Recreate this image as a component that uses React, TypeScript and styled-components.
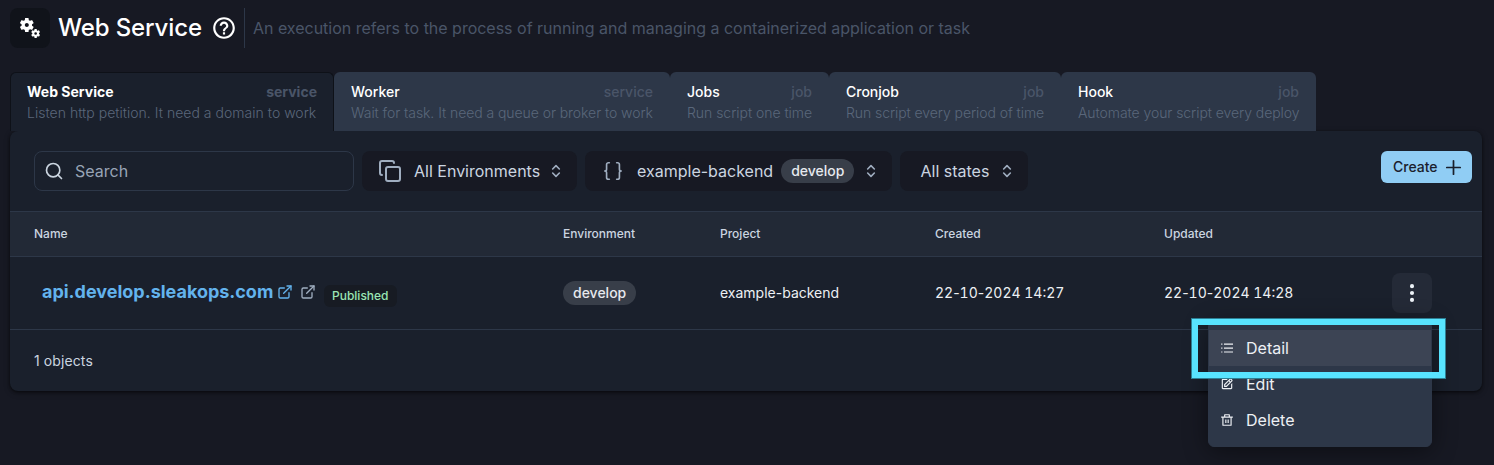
import React from "react";
import styled, { createGlobalStyle } from "styled-components";
import { MdMiscellaneousServices, MdHelpOutline } from "react-icons/md";
import { LuCopy, LuBraces, LuChevronsUpDown, LuPlus } from "react-icons/lu";
import { FiSearch, FiExternalLink } from "react-icons/fi";
import { BsThreeDotsVertical } from "react-icons/bs";
import { BiEdit } from "react-icons/bi";
import { RiDeleteBinLine } from "react-icons/ri";

const GlobalStyle = createGlobalStyle`
  *, *::before, *::after { box-sizing: border-box; }
  html, body { background: #171923; }
  body {
    margin: 0;
    height: 465px;
    overflow: hidden;
    font-family: Inter, sans-serif;
    font-size: 16px;
    line-height: 24px;
    color: rgba(255, 255, 255, 0.92);
  }
  svg { display: block; flex-shrink: 0; }
`;

const Page = styled.main`
  padding: 8px 12px 0 10px;
`;

const Header = styled.header`
  display: flex;
  align-items: center;
  height: 40px;
`;

const HeaderIcon = styled.div`
  display: grid;
  place-items: center;
  width: 40px;
  height: 40px;
  border-radius: 8px;
  background: #10131a;
  color: #fff;
`;

const Title = styled.h1`
  margin: 0 9px 0 8px;
  font-size: 24px;
  line-height: 32px;
  font-weight: 500;
  letter-spacing: -0.12px;
  color: #fff;
`;

const Description = styled.p`
  display: flex;
  align-items: center;
  height: 40px;
  margin: 0 0 0 7px;
  padding-left: 8px;
  border-left: 1px solid #2d3748;
  letter-spacing: -0.01px;
  color: #4a5568;
`;

const Tabs = styled.nav`
  display: flex;
  margin-top: 24px;
`;

const Tab = styled.div<{ $active?: boolean; $width: number }>`
  width: ${(p) => p.$width}px;
  height: 59px;
  padding: 8px 16px 0;
  border: 1px solid ${(p) => (p.$active ? "#0e1118" : "transparent")};
  border-bottom: 0;
  border-radius: 6px 6px 0 0;
  background: ${(p) => (p.$active ? "#1a202c" : "#2d3748")};
  font-size: 14px;
  line-height: 21px;
  font-weight: ${(p) => (p.$active ? 700 : 500)};
  color: #fff;
  white-space: nowrap;
`;

const TabHead = styled.div`
  display: flex;
  justify-content: space-between;
`;

const TabKind = styled.span`
  color: #4a5568;
`;

const TabText = styled.div<{ $spacing: number }>`
  font-weight: 300;
  letter-spacing: ${(p) => p.$spacing}px;
  color: #5a677b;
`;

const Card = styled.section`
  height: 260px;
  border-radius: 8px;
  background: #1a202c;
  box-shadow: 0 1px 3px rgba(0, 0, 0, 0.5), 0 2px 6px rgba(0, 0, 0, 0.3);
`;

const Toolbar = styled.div`
  display: flex;
  gap: 8px;
  height: 80px;
  padding: 20px 10px 0 24px;
`;

const SearchBox = styled.div`
  display: flex;
  align-items: center;
  gap: 11px;
  width: 320px;
  height: 40px;
  padding-left: 9px;
  border: 1px solid #2d3748;
  border-radius: 8px;
  color: #98a4b6;

  svg { color: #cbd5e0; }
`;

const Select = styled.div<{ $width: number; $pad: number }>`
  display: flex;
  align-items: center;
  width: ${(p) => p.$width}px;
  height: 40px;
  padding: 0 13px 0 ${(p) => p.$pad}px;
  border-radius: 8px;
  background: #171923;
  color: #cbd5e0;

  > svg { color: #a0aec0; }
`;

const SelectLabel = styled.span<{ $gap?: number }>`
  margin-left: ${(p) => p.$gap ?? 0}px;
  margin-right: 8px;
  white-space: nowrap;
`;

const SelectArrow = styled.span`
  margin-left: auto;
  color: #a0aec0;
`;

const Pill = styled.span`
  display: inline-flex;
  align-items: center;
  height: 24px;
  padding: 0 10px;
  border-radius: 12px;
  background: #383e49;
  color: #e6e9ee;
  font-size: 14px;
  font-weight: 500;
`;

const CreateButton = styled.button`
  display: flex;
  align-items: center;
  gap: 4px;
  width: 91px;
  height: 32px;
  margin-left: auto;
  padding: 0 0 0 12px;
  border: 0;
  border-radius: 6px;
  background: #90cdf4;
  color: #1a202c;
  font: 500 14px/20px Inter, sans-serif;
`;

const Row = styled.div<{ $head?: boolean }>`
  display: grid;
  grid-template-columns: 529px 157px 215px 229px 228px 40px;
  align-items: center;
  height: ${(p) => (p.$head ? 46 : 73)}px;
  padding-left: 24px;
  border-top: ${(p) => (p.$head ? "1px solid #2d3748" : "0")};
  border-bottom: 1px solid #2d3748;
  background: ${(p) => (p.$head ? "#222936" : "transparent")};
  color: ${(p) => (p.$head ? "#cbd5e0" : "#edf0f4")};
  font-size: ${(p) => (p.$head ? 12 : 14)}px;
  font-weight: ${(p) => (p.$head ? 500 : 400)};
`;

const DateDigits = styled.span`
  font-variant-numeric: tabular-nums;
`;

const NameCell = styled.div`
  display: flex;
  align-items: center;
  padding: 0 0 2px 8px;
`;

const ServiceLink = styled.a`
  display: flex;
  align-items: center;
  gap: 4px;
  width: 250px;
  margin-right: 8px;
  color: #63b3ed;
  font-size: 18px;
  font-weight: 700;
  letter-spacing: -0.02px;

  svg { margin-left: auto; }
`;

const OutIcon = styled.span`
  color: #a0aec0;
`;

const Status = styled.span`
  height: 22px;
  margin: 7px 0 0 8px;
  padding: 0 8px;
  border-radius: 6px;
  background: #171b23;
  color: #9ae6b4;
  font-size: 12px;
  line-height: 22px;
  font-weight: 500;
`;

const MenuAnchor = styled.div`
  position: relative;
`;

const MenuButton = styled.button`
  display: grid;
  place-items: center;
  width: 40px;
  height: 40px;
  padding: 0;
  border: 0;
  border-radius: 8px;
  background: #242a37;
  color: #edf2f7;
`;

const Menu = styled.div`
  position: absolute;
  top: 48px;
  right: 0;
  width: 224px;
  height: 126px;
  padding: 8px 0;
  border: 1px solid #2d3748;
  border-radius: 6px;
  background: #2d3748;
  box-shadow: 0 4px 24px rgba(0, 0, 0, 0.45);
`;

const MenuItem = styled.div<{ $active?: boolean }>`
  display: flex;
  align-items: center;
  gap: 12px;
  height: 36px;
  padding-left: 11px;
  background: ${(p) => (p.$active ? "#3c4454" : "transparent")};
  color: #edf0f4;
  font-size: 16px;
`;

const Highlight = styled.div`
  position: absolute;
  top: 45px;
  right: -14px;
  width: 255px;
  height: 61px;
  border: 7px solid #58e4ff;
  outline: 1px solid #2d7f94;
  outline-offset: -1px;
`;

const Footer = styled.div`
  padding: 19px 24px;
  color: #cbd5e0;
  font-size: 14px;
  letter-spacing: 0.1px;
`;

const ListIcon = () => (
  <svg width="14" height="14" viewBox="0 0 14 14" fill="currentColor">
    <path d="M4 2.6h9v1.2H4zM4 6.5h9v1.2H4zM4 10.4h9v1.2H4zM1.2 2.6h1.2v1.2H1.2zM1.2 6.5h1.2v1.2H1.2zM1.2 10.4h1.2v1.2H1.2z" />
  </svg>
);

const TABS = [
  { name: "Web Service", kind: "service", text: "Listen http petition. It need a domain to work", width: 324, spacing: 0.025 },
  { name: "Worker", kind: "service", text: "Wait for task. It need a queue or broker to work", width: 336, spacing: -0.065 },
  { name: "Jobs", kind: "job", text: "Run script one time", width: 159, spacing: -0.03 },
  { name: "Cronjob", kind: "job", text: "Run script every period of time", width: 232, spacing: -0.07 },
  { name: "Hook", kind: "job", text: "Automate your script every deploy", width: 255, spacing: -0.065 },
];

const Arrows = () => (
  <SelectArrow>
    <LuChevronsUpDown size={16} strokeWidth={2.4} />
  </SelectArrow>
);

const DateTime = ({ value }: { value: string }) => (
  <span>
    {value.split("-").map((part, i) => (
      <React.Fragment key={i}>
        {i > 0 && "-"}
        <DateDigits>{part}</DateDigits>
      </React.Fragment>
    ))}
  </span>
);

export default function App() {
  return (
    <>
      <GlobalStyle />
      <Page>
        <Header>
          <HeaderIcon><MdMiscellaneousServices size={24} /></HeaderIcon>
          <Title>Web Service</Title>
          <MdHelpOutline size={26} color="#fff" />
          <Description>
            An execution refers to the process of running and managing a containerized application or task
          </Description>
        </Header>
        <Tabs>
          {TABS.map((t, i) => (
            <Tab key={t.name} $active={i === 0} $width={t.width}>
              <TabHead>
                <span>{t.name}</span>
                <TabKind>{t.kind}</TabKind>
              </TabHead>
              <TabText $spacing={t.spacing}>{t.text}</TabText>
            </Tab>
          ))}
        </Tabs>
        <Card>
          <Toolbar>
            <SearchBox><FiSearch size={20} />Search</SearchBox>
            <Select $width={215} $pad={16}>
              <LuCopy size={24} />
              <SelectLabel $gap={12}>All Environments</SelectLabel>
              <Arrows />
            </Select>
            <Select $width={307} $pad={17}>
              <LuBraces size={22} strokeWidth={1.8} />
              <SelectLabel $gap={13}>example-backend</SelectLabel>
              <Pill>develop</Pill>
              <Arrows />
            </Select>
            <Select $width={128} $pad={20.5}>
              <SelectLabel>All states</SelectLabel>
              <Arrows />
            </Select>
            <CreateButton>Create<LuPlus size={23} strokeWidth={1.8} /></CreateButton>
          </Toolbar>
          <Row $head>
            <span>Name</span>
            <span>Environment</span>
            <span>Project</span>
            <span>Created</span>
            <span>Updated</span>
          </Row>
          <Row>
            <NameCell>
              <ServiceLink>api.develop.sleakops.com<FiExternalLink size={16} /></ServiceLink>
              <OutIcon><FiExternalLink size={16} /></OutIcon>
              <Status>Published</Status>
            </NameCell>
            <div><Pill>develop</Pill></div>
            <span>example-backend</span>
            <DateTime value="22-10-2024 14:27" />
            <DateTime value="22-10-2024 14:28" />
            <MenuAnchor>
              <MenuButton><BsThreeDotsVertical size={22} /></MenuButton>
              <Menu>
                <MenuItem $active><ListIcon />Detail</MenuItem>
                <MenuItem><BiEdit size={14} />Edit</MenuItem>
                <MenuItem><RiDeleteBinLine size={14} />Delete</MenuItem>
              </Menu>
              <Highlight />
            </MenuAnchor>
          </Row>
          <Footer>1 objects</Footer>
        </Card>
      </Page>
    </>
  );
}
